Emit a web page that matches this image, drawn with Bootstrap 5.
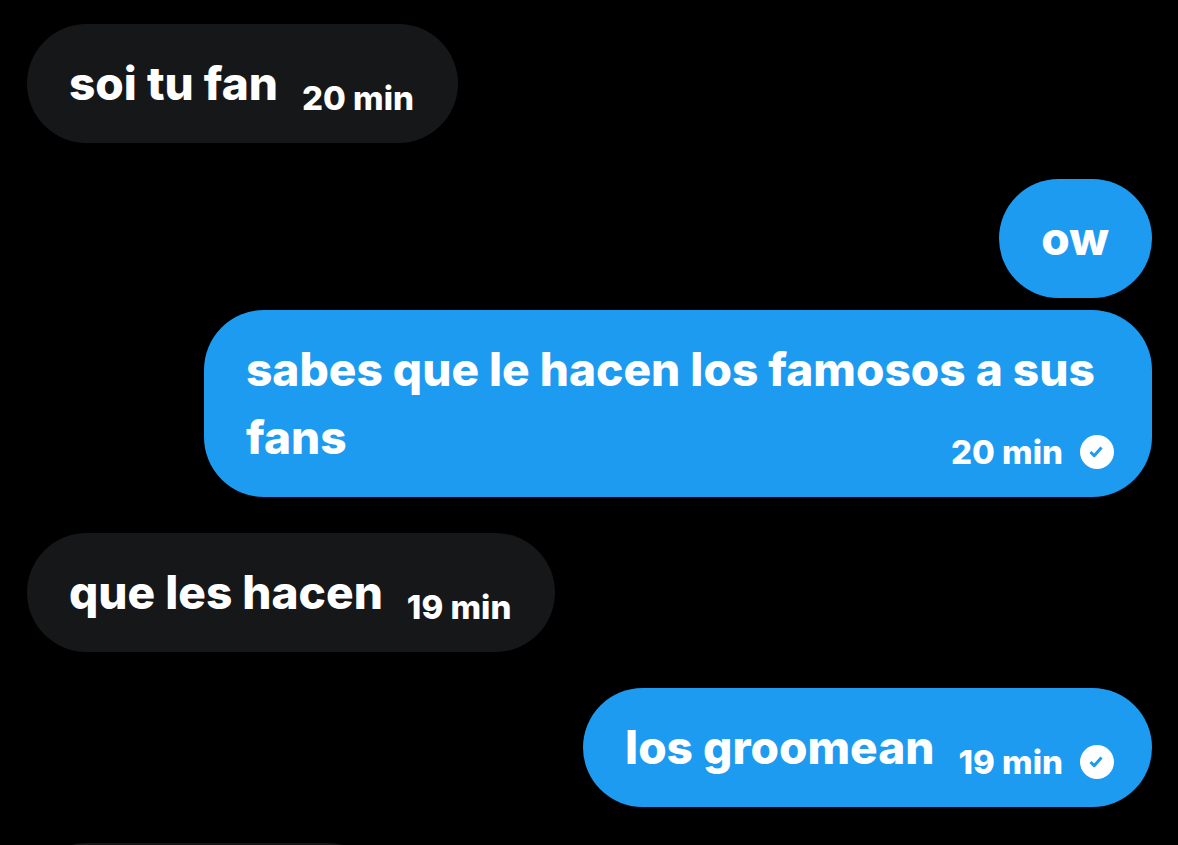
<!DOCTYPE html>
<html lang="es">
<head>
<meta charset="utf-8">
<meta name="viewport" content="width=device-width, initial-scale=1">
<title>Mensajes</title>
<link href="https://cdn.jsdelivr.net/npm/bootstrap@5.3.0/dist/css/bootstrap.min.css" rel="stylesheet">
<style>
body{background:#000;color:#fff;font-family:Inter,"Open Sans",sans-serif;font-weight:800}
.thread{padding:24px 26px 0 27px}
.bubble{display:flow-root;flex-shrink:0;border-radius:60px;padding:25px 43px 26px 42px;font-size:46px;line-height:68px;max-width:min(948px,90%)}
.theirs{background:#161719;padding-right:44px}
.mine{background:#1d9bf0}
.sent{padding-right:38px}
.stamp{float:right;display:flex;align-items:center;gap:17px;margin:29px 0 -1px 24px;font-size:33px;line-height:40px;white-space:nowrap}
.stamp svg{width:34px;height:34px}
.group-gap{margin-top:36px}
.reply-gap{margin-top:12px}
.upcoming{width:32%;height:119px}
</style>
</head>
<body>
<svg class="d-none" aria-hidden="true">
<symbol id="sent-check" viewBox="0 0 34 34"><circle cx="17" cy="17" r="17" fill="#fff"/><path d="M10.5 17l3.7 3.7 7.3-8.2" fill="none" stroke="#1d9bf0" stroke-width="3" stroke-linejoin="round"/></symbol>
</svg>
<main class="thread vh-100 overflow-hidden d-flex flex-column align-items-start">
<article class="bubble theirs">soi tu fan<time class="stamp">20 min</time></article>
<article class="bubble mine align-self-end group-gap">ow</article>
<article class="bubble mine sent align-self-end reply-gap">sabes que le hacen los famosos a sus fans<span class="stamp"><time>20 min</time><svg role="img" aria-label="Enviado"><use href="#sent-check"/></svg></span></article>
<article class="bubble theirs group-gap">que les hacen<time class="stamp">19 min</time></article>
<article class="bubble mine sent align-self-end group-gap">los groomean<span class="stamp"><time>19 min</time><svg role="img" aria-label="Enviado"><use href="#sent-check"/></svg></span></article>
<div class="bubble theirs group-gap upcoming"></div>
</main>
<script src="https://cdn.jsdelivr.net/npm/bootstrap@5.3.0/dist/js/bootstrap.bundle.min.js"></script>
</body>
</html>
